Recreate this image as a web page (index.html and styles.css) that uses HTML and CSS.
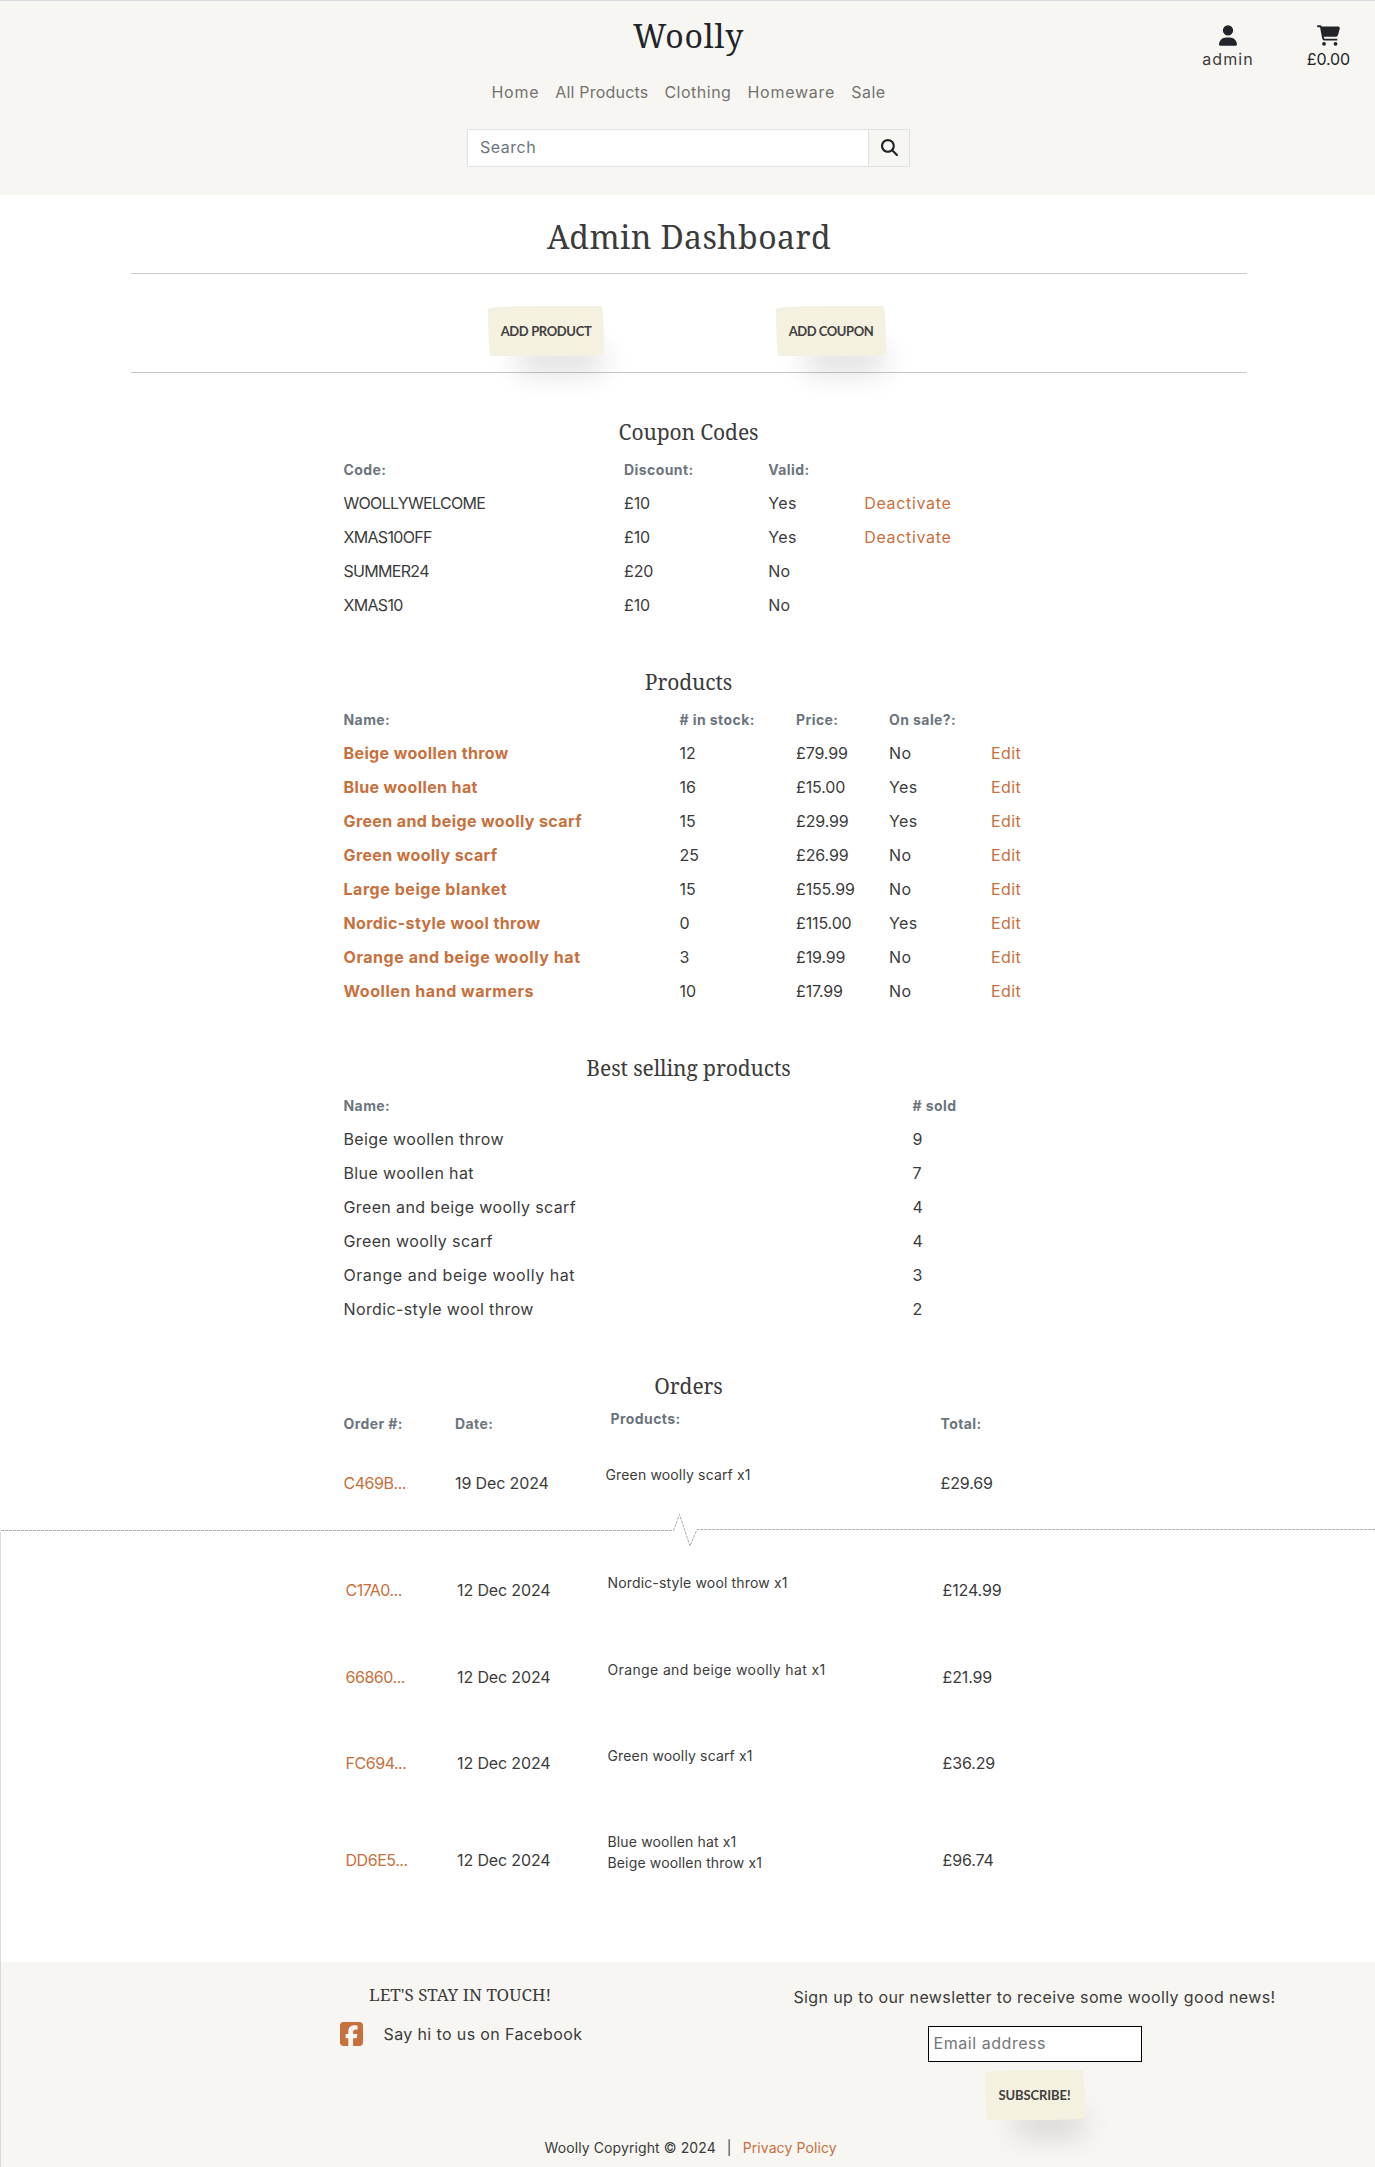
FILE: index.html
```html
<!DOCTYPE html>
<html lang="en">
<head>
<meta charset="utf-8">
<title>Woolly - Admin Dashboard</title>
<link rel="stylesheet" href="styles.css">
</head>
<body>
<header class="header">
  <div class="header-main">
    <a class="brand" href="#">Woolly</a>
    <nav class="nav">
      <a class="n-home" href="#">Home</a>
      <a class="n-all" href="#">All Products</a>
      <a href="#">Clothing</a>
      <a class="n-homeware" href="#">Homeware</a>
      <a href="#">Sale</a>
    </nav>
    <form class="search">
      <input class="search-input" type="text" placeholder="Search">
      <button class="search-btn" type="button" aria-label="Search">
        <svg width="17" height="17" viewBox="0 0 512 512" fill="currentColor"><path d="M416 208c0 45.9-14.900 88.300-40 122.700L502.600 457.400c12.500 12.500 12.500 32.800 0 45.300s-32.800 12.500-45.300 0L330.700 376c-34.400 25.200-76.800 40-122.700 40C93.100 416 0 322.900 0 208S93.100 0 208 0S416 93.100 416 208zM208 352a144 144 0 1 0 0-288 144 144 0 1 0 0 288z"/></svg>
      </button>
    </form>
  </div>
  <div class="account">
    <a class="account-item" href="#">
      <svg width="18" height="21" viewBox="0 0 448 512" fill="currentColor"><path d="M224 256A128 128 0 1 0 224 0a128 128 0 1 0 0 256zm-45.700 48C79.800 304 0 383.800 0 482.300C0 498.700 13.300 512 29.700 512H418.300c16.400 0 29.700-13.300 29.700-29.700C448 383.800 368.200 304 269.700 304H178.300z"/></svg>
      <span class="user">admin</span>
    </a>
    <a class="account-item" href="#">
      <svg width="23" height="21" viewBox="0 0 576 512" fill="currentColor"><path d="M0 24C0 10.700 10.700 0 24 0H69.500c22 0 41.500 12.800 50.600 32h411c26.300 0 45.500 25 38.600 50.400l-41 152.300c-8.500 31.400-37 53.300-69.500 53.300H170.700l5.400 28.500c2.200 11.300 12.100 19.500 23.600 19.500H488c13.300 0 24 10.700 24 24s-10.700 24-24 24H199.700c-34.600 0-64.300-24.600-70.700-58.500L77.400 54.500c-.7-3.800-4-6.500-7.900-6.500H24C10.700 48 0 37.300 0 24zM128 464a48 48 0 1 1 96 0 48 48 0 1 1-96 0zm336-48a48 48 0 1 1 0 96 48 48 0 1 1 0-96z"/></svg>
      <span class="money">£0.00</span>
    </a>
  </div>
</header>

<main>
  <div class="intro">
    <h1>Admin Dashboard</h1>
    <div class="actions">
      <a class="btn" href="#">ADD PRODUCT</a>
      <a class="btn coupon-btn" href="#">ADD COUPON</a>
    </div>
  </div>

  <section>
    <h2>Coupon Codes</h2>
    <div class="row coupons head"><span>Code:</span><span>Discount:</span><span>Valid:</span></div>
    <div class="row coupons"><span class="code">WOOLLYWELCOME</span><span class="money">£10</span><span>Yes</span><a class="deact" href="#">Deactivate</a></div>
    <div class="row coupons"><span class="code">XMAS10OFF</span><span class="money">£10</span><span>Yes</span><a class="deact" href="#">Deactivate</a></div>
    <div class="row coupons"><span class="code">SUMMER24</span><span class="money">£20</span><span>No</span></div>
    <div class="row coupons"><span class="code">XMAS10</span><span class="money">£10</span><span>No</span></div>
  </section>

  <section>
    <h2>Products</h2>
    <div class="row products head"><span>Name:</span><span># in stock:</span><span>Price:</span><span>On sale?:</span></div>
    <div class="row products"><a class="name" href="#">Beige woollen throw</a><span class="money">12</span><span class="money">£79.99</span><span>No</span><a href="#">Edit</a></div>
    <div class="row products"><a class="name" href="#">Blue woollen hat</a><span class="money">16</span><span class="money">£15.00</span><span>Yes</span><a href="#">Edit</a></div>
    <div class="row products"><a class="name" href="#">Green and beige woolly scarf</a><span class="money">15</span><span class="money">£29.99</span><span>Yes</span><a href="#">Edit</a></div>
    <div class="row products"><a class="name" href="#">Green woolly scarf</a><span class="money">25</span><span class="money">£26.99</span><span>No</span><a href="#">Edit</a></div>
    <div class="row products"><a class="name wide" href="#">Large beige blanket</a><span class="money">15</span><span class="money">£155.99</span><span>No</span><a href="#">Edit</a></div>
    <div class="row products"><a class="name" href="#">Nordic-style wool throw</a><span class="money">0</span><span class="money">£115.00</span><span>Yes</span><a href="#">Edit</a></div>
    <div class="row products"><a class="name wide" href="#">Orange and beige woolly hat</a><span class="money">3</span><span class="money">£19.99</span><span>No</span><a href="#">Edit</a></div>
    <div class="row products"><a class="name wide" href="#">Woollen hand warmers</a><span class="money">10</span><span class="money">£17.99</span><span>No</span><a href="#">Edit</a></div>
  </section>

  <section>
    <h2>Best selling products</h2>
    <div class="row sellers head"><span>Name:</span><span># sold</span></div>
    <div class="row sellers"><span>Beige woollen throw</span><span>9</span></div>
    <div class="row sellers"><span>Blue woollen hat</span><span>7</span></div>
    <div class="row sellers"><span>Green and beige woolly scarf</span><span>4</span></div>
    <div class="row sellers"><span>Green woolly scarf</span><span>4</span></div>
    <div class="row sellers"><span class="wide">Orange and beige woolly hat</span><span>3</span></div>
    <div class="row sellers"><span>Nordic-style wool throw</span><span>2</span></div>
  </section>

  <section>
    <h2>Orders</h2>
    <div class="row orders head"><span>Order #:</span><span>Date:</span><span class="items-head">Products:</span><span>Total:</span></div>
    <div class="row orders first"><a class="num" href="#">C469B...</a><span class="money">19 Dec 2024</span><span class="items">Green woolly scarf x1</span><span class="money">£29.69</span></div>
  </section>
</main>

<svg class="tear" width="1375" height="34" viewBox="0 0 1375 34" fill="none" stroke="#adadad" stroke-dasharray="3 1"><path d="M1 17.500H673.500L679.500 1.500L690 33L697 16.500H1375"/></svg>

<div class="lower">
  <div class="more-orders">
    <div class="row orders"><a class="num" href="#">C17A0...</a><span class="money">12 Dec 2024</span><span class="items">Nordic-style wool throw x1</span><span class="money">£124.99</span></div>
    <div class="row orders"><a class="num" href="#">66860...</a><span class="money">12 Dec 2024</span><span class="items wide">Orange and beige woolly hat x1</span><span class="money">£21.99</span></div>
    <div class="row orders short"><a class="num" href="#">FC694...</a><span class="money">12 Dec 2024</span><span class="items">Green woolly scarf x1</span><span class="money">£36.29</span></div>
    <div class="row orders tall"><a class="num" href="#">DD6E5...</a><span class="money">12 Dec 2024</span><span class="items">Blue woollen hat x1<br>Beige woollen throw x1</span><span class="money">£96.74</span></div>
  </div>

  <footer class="footer">
    <div class="footer-cols">
      <div>
        <h3>LET'S STAY IN TOUCH!</h3>
        <div class="social">
          <a href="#" aria-label="Facebook"><svg width="23" height="24" viewBox="0 0 448 448" preserveAspectRatio="none" fill="currentColor"><path d="M64 0C28.700 0 0 28.700 0 64V384c0 35.300 28.700 64 64 64h98.200V302.300H109.400V224h52.800V190.300c0-87.100 39.400-127.500 125-127.500 16.200 0 44.200 3.200 55.700 6.400V140c-6-.6-16.500-1-29.600-1-42 0-58.200 15.900-58.200 57.200V224h83.600l-14.400 78.300H255.100V448H384c35.300 0 64-28.700 64-64V64c0-35.300-28.700-64-64-64H64z"/></svg></a>
          <span>Say hi to us on Facebook</span>
        </div>
      </div>
      <div class="newsletter">
        <p>Sign up to our newsletter to receive some woolly good news!</p>
        <input class="email" type="email" placeholder="Email address">
        <a class="btn subscribe" href="#">SUBSCRIBE!</a>
      </div>
    </div>
    <div class="legal"><span>Woolly Copyright © 2024</span><span>|</span><a href="#">Privacy Policy</a></div>
  </footer>
</div>
</body>
</html>
```
FILE: styles.css
```css
* { box-sizing: border-box; }

body {
  margin: 0;
  background: #fff;
  color: #3b3b3b;
  font: 16px/24px Inter, "Open Sans", sans-serif;
  letter-spacing: .38px;
}

h1, h2, h3, p { margin: 0; }
h1, h2, h3, .brand { font-family: "Noto Serif", "DejaVu Serif", serif; font-weight: 400; }
a { color: #c8703d; text-decoration: none; }
svg { display: block; }

/* Header */
.header {
  display: grid;
  grid-template-columns: 1fr 443px 1fr;
  height: 195px;
  padding: 15px 25px 0 27px;
  border-top: 1px solid #d5dbdf;
  background: #f7f6f2;
}
.header-main { grid-column: 2; display: flex; flex-direction: column; align-items: center; }
.brand { height: 40px; color: #212529; font-size: 32px; line-height: 40px; letter-spacing: .8px; }
.nav { display: flex; gap: 16px; margin-top: 24px; white-space: nowrap; }
.nav a { color: #74736f; letter-spacing: .5px; }
.nav .n-all { letter-spacing: .2px; }
.nav .n-home, .nav .n-homeware { letter-spacing: .75px; }
.search {
  display: flex;
  width: 443px;
  height: 38px;
  margin-top: 25px;
  border: 1px solid #dee2e6;
}
.search-input {
  flex: 1;
  min-width: 0;
  padding: 0 12px 2px;
  border: 0;
  background: #fff;
  font: inherit;
  letter-spacing: .5px;
}
.search-input::placeholder { color: #6c757d; opacity: 1; }
.search-btn {
  display: flex;
  align-items: center;
  justify-content: center;
  width: 41px;
  padding: 0 0 2px;
  border: 0;
  border-left: 1px solid #dee2e6;
  background: #f7f6f2;
  color: #212529;
}
.account { display: flex; justify-content: flex-end; gap: 53px; padding-top: 9px; }
.account-item { display: flex; flex-direction: column; align-items: center; height: 48px; color: #212529; }
.account-item span { margin-top: 1px; }
.user { color: #3b3b3b; letter-spacing: 1.1px; }
.money { letter-spacing: -.13px; }

/* Page intro */
.intro { width: 1116px; margin-left: 131px; }
h1 {
  height: 79px;
  padding-top: 18px;
  border-bottom: 1px solid #c8c8c8;
  font-size: 32px;
  line-height: 48px;
  letter-spacing: .4px;
  text-align: center;
}
.actions {
  display: flex;
  gap: 172px;
  height: 99px;
  padding: 32px 0 0 357px;
  border-bottom: 1px solid #c8c8c8;
}
.btn {
  display: flex;
  align-items: center;
  justify-content: center;
  width: 116px;
  height: 50px;
  border-radius: 255px 15px 225px 15px / 15px 225px 15px 255px;
  background: #f5f1e0;
  box-shadow: rgba(0, 0, 0, .2) 14px 29px 30px -16px;
  color: #41403e;
  font: 700 13px/23px Lato, sans-serif;
  letter-spacing: -.36px;
}
.coupon-btn { width: 110px; letter-spacing: -.46px; }

/* Data tables */
section { padding-top: 44px; }
h2 { height: 36px; padding-left: 2px; font-size: 21px; line-height: 30px; letter-spacing: -.1px; text-align: center; }
.row { display: grid; align-items: center; height: 34px; padding: 0 0 2px 343.500px; white-space: nowrap; }
.head { padding-bottom: 0; color: #6c757d; font-size: 14px; font-weight: 700; letter-spacing: .42px; }
.coupons { grid-template-columns: 280.500px 144.200px 96px auto; }
.products { grid-template-columns: 336px 116.500px 93px 102px auto; }
.sellers { grid-template-columns: 569px auto; }
.orders { grid-template-columns: 111.500px 150.500px 335px auto; }
.code { letter-spacing: -.69px; }
.deact { letter-spacing: .67px; }
.name { font-weight: 700; }
.wide { letter-spacing: .55px; }
.num { letter-spacing: -.46px; }
.items { padding-bottom: 16px; font-size: 14px; line-height: 21px; letter-spacing: .15px; }
.items.wide { letter-spacing: .37px; }
.items-head { padding: 0 0 10px 5px; }
.first { height: 85px; }

/* Break line between the two order lists */
.tear { margin: -13px 0 -15px; }

.lower { border-left: 1px solid #d5dbdf; }
.more-orders { padding: 15px 0 47px 1px; }
.more-orders .row { height: 87px; padding-bottom: 1px; }
.more-orders .short { height: 85px; }
.more-orders .tall { height: 109px; }

/* Footer */
.footer { height: 205px; padding-top: 21px; background: #f7f6f2; }
.footer-cols { display: grid; grid-template-columns: 454px 481px; padding-left: 339px; }
h3 { height: 24px; padding-left: 29px; font-size: 17px; line-height: 24px; letter-spacing: .05px; }
.social { display: flex; gap: 20.500px; margin-top: 15px; }
.newsletter { display: flex; flex-direction: column; align-items: center; padding-top: 2px; white-space: nowrap; }
.email {
  width: 214px;
  height: 36px;
  margin-top: 17px;
  padding: 0 5px 2px;
  border: 1px solid #000;
  background: #fff;
  font: inherit;
  letter-spacing: .55px;
}
.email::placeholder { color: #757575; opacity: 1; }
.subscribe { width: 100px; margin-top: 8px; letter-spacing: -.1px; }
.legal { display: flex; gap: 11px; margin-top: 16px; padding-left: 543.500px; font-size: 14px; letter-spacing: .1px; }
```
